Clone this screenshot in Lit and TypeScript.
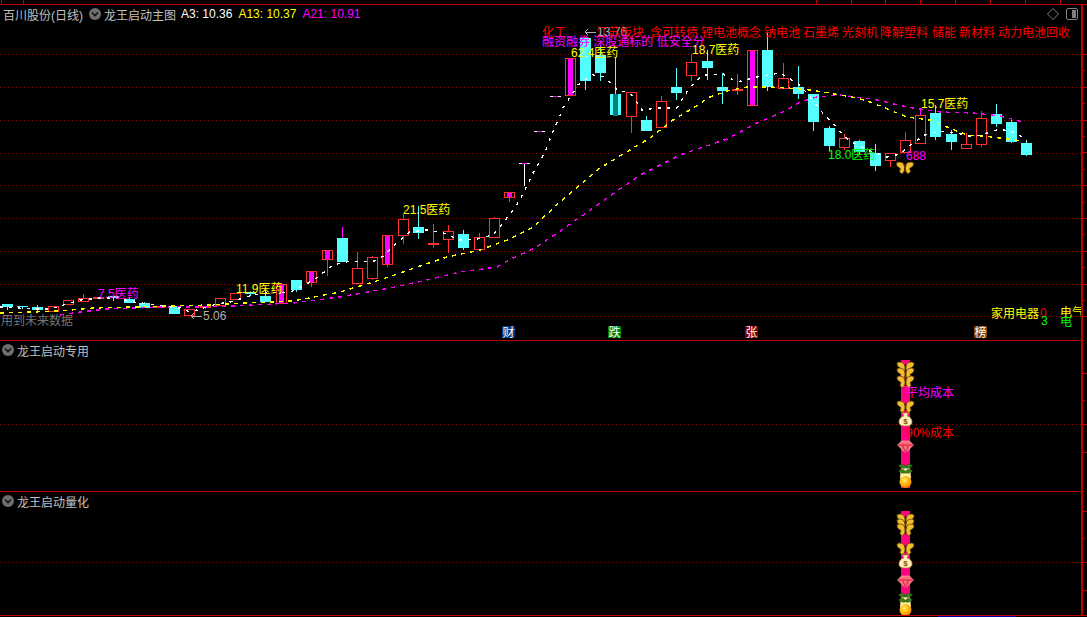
import { LitElement, html, css, svg } from "lit";
import { customElement } from "lit/decorators.js";

const W = 1081;

// [center x, kind, body top, body bottom, wick top, wick bottom, top wick colour]
// kinds: c cyan, t cyan with teal core, r hollow red, f flat red, m red with magenta core, w white T
type Candle = [number, string, number, number, number, number, string?];

const CANDLES: Candle[] = [
  [7, "c", 304, 307, 304, 310], [22, "c", 306, 307, 306, 309], [37, "c", 307, 310, 305, 312],
  [53, "r", 306, 311, 306, 311], [68, "r", 300, 304, 300, 304], [83, "r", 298, 301, 294, 301],
  [98, "f", 297, 299, 297, 299], [113, "c", 296, 298, 296, 301], [129, "c", 299, 303, 297, 303],
  [144, "c", 303, 308, 302, 308], [159, "f", 306, 308, 306, 308], [174, "c", 306, 314, 306, 314],
  [189, "r", 309, 315, 309, 315], [205, "f", 306, 308, 306, 309], [220, "r", 298, 305, 298, 305],
  [235, "r", 293, 299, 293, 299], [250, "c", 292, 294, 292, 296], [265, "c", 296, 302, 290, 302],
  [281, "m", 284, 303, 284, 303], [296, "c", 280, 290, 280, 292], [311, "m", 271, 282, 271, 287],
  [327, "m", 250, 259, 250, 276], [342, "c", 238, 262, 227, 262, "#ff00ff"], [357, "r", 268, 283, 252, 283],
  [372, "r", 257, 278, 256, 280], [387, "m", 235, 264, 235, 267], [403, "r", 219, 235, 214, 244],
  [418, "c", 227, 233, 206, 239], [433, "f", 243, 245, 224, 248], [448, "r", 231, 239, 225, 253],
  [463, "c", 234, 248, 230, 250], [479, "r", 237, 249, 233, 251], [494, "r", 218, 237, 217, 237],
  [509, "m", 192, 197, 192, 202], [524, "w", 163, 164, 163, 186], [539, "w", 131, 132, 131, 132],
  [555, "w", 96, 97, 96, 97], [570, "m", 58, 95, 58, 95], [585, "c", 38, 81, 37, 90],
  [600, "c", 55, 73, 45, 81], [615, "t", 94, 115, 58, 116], [631, "r", 92, 116, 92, 133],
  [646, "c", 120, 131, 116, 131], [661, "r", 101, 127, 96, 127, "#ff00ff"], [676, "c", 87, 93, 68, 100],
  [691, "r", 62, 75, 54, 81, "#ff00ff"], [707, "c", 61, 68, 50, 80], [722, "c", 87, 91, 73, 104],
  [737, "f", 89, 91, 74, 95], [752, "m", 50, 105, 50, 105], [767, "c", 50, 87, 33, 91],
  [783, "r", 78, 88, 63, 88], [798, "c", 87, 94, 66, 99], [813, "c", 94, 122, 94, 131],
  [829, "c", 128, 146, 126, 151], [844, "r", 138, 147, 134, 150], [859, "c", 141, 152, 140, 155],
  [875, "c", 153, 166, 144, 171], [890, "r", 153, 160, 153, 167], [905, "r", 140, 152, 132, 152],
  [920, "r", 115, 143, 108, 143, "#ff00ff"], [935, "c", 113, 137, 105, 140], [951, "c", 134, 142, 130, 150],
  [966, "r", 144, 148, 133, 148], [981, "r", 118, 144, 111, 147, "#ff00ff"], [996, "c", 114, 124, 104, 127],
  [1011, "c", 122, 142, 119, 143], [1026, "c", 143, 155, 140, 156],
];

const A3 = "0,307 33,309 50,309 60,306 80,300 100,298 117,298 133,302 150,304 163,306 180,308 190,312 207,307 217,304 230,302 253,295 267,293 290,292 305,285 318,277 333,265 350,261 372,262 382,257 397,243 410,232 427,230 443,233 460,240 477,239 493,235 507,218 520,200 533,173 545,152 550,139 563,108 578,85 593,75 605,77 617,90 630,93 642,110 657,108 677,108 690,87 703,75 723,74 737,82 757,77 780,73 797,83 807,93 822,112 837,128 848,140 867,150 887,157 900,154 913,143 925,135 940,131 957,133 973,137 987,133 1000,129 1017,133 1027,142";
const A13 = "0,313 33,312 60,311 93,308 133,307 167,306 210,305 247,303 293,301 340,292 383,279 417,267 447,257 480,250 510,239 533,227 559,203 600,168 650,138 673,120 693,108 710,97 727,91 747,87 770,87 803,89 823,92 840,95 857,98 873,103 890,110 907,117 930,120 947,127 967,135 983,136 1000,138 1023,141";
const A21 = "60,315 80,312 107,309 133,308 167,307 207,307 233,306 273,304 293,303 340,297 390,288 427,280 460,272 497,267 513,258 533,249 559,232 600,203 640,175 680,155 727,139 757,123 787,110 800,102 817,97 840,95 873,99 907,107 940,112 973,113 1000,116 1023,122";

const TAGS: [string, number][] = [
  ["化工", 542], ["江苏板块", 596], ["含可转债", 650], ["锂电池概念", 701], ["钠电池", 764],
  ["石墨烯", 803], ["光刻机", 842], ["降解塑料", 880], ["储能", 932], ["新材料", 959], ["动力电池回收", 998],
];

// [text, x, centre y, colour]
const LABELS: [string, number, number, string][] = [
  ["62.4医药", 571, 53, "#ffff00"], ["18.7医药", 692, 50, "#ffff00"], ["15.7医药", 921, 104, "#ffff00"],
  ["18.0医药", 828, 155, "#00ff00"], ["688", 906, 156, "#ff00ff"], ["21.5医药", 403, 210, "#ffff00"],
  ["7.5医药", 98, 294, "#ff00ff"], ["11.9医药", 236, 289, "#ffff00"],
];

const BADGES: [string, number, string][] = [
  ["财", 502, "#003c82"], ["跌", 608, "#008000"], ["张", 745, "#800000"], ["榜", 974, "#804000"],
];

const GRID = [54, 87, 120, 153, 185, 218, 251, 284, 316];
const TOP_TICKS = [1, 23, 816, 851, 885, 920, 955, 990, 1025, 1060];

const chevron = html`<svg class="chevron" viewBox="0 0 12 12">
  <circle cx="6" cy="6" r="6" fill="#6e6e6e"></circle>
  <path d="M3 4.5 6 7.5 9 4.5" fill="none" stroke="#111" stroke-width="1.6"></path>
</svg>`;

function candle([x, kind, top, bottom, wickTop, wickBottom, wickColor]: Candle) {
  const color = kind === "c" || kind === "t" ? "#55ffff" : kind === "w" ? "#ffffff" : "#ff3232";
  const left = x - 5;
  const wick = svg`
    <line x1=${x + 0.5} x2=${x + 0.5} y1=${wickTop} y2=${top} stroke=${wickColor ?? color}></line>
    <line x1=${x + 0.5} x2=${x + 0.5} y1=${bottom} y2=${wickBottom} stroke=${color}></line>`;
  if (kind === "c" || kind === "t") {
    return svg`${wick}<rect x=${left} y=${top} width="11" height=${bottom - top} fill=${color}></rect>
      ${kind === "t" ? svg`<rect x=${left + 3} y=${top} width="5" height=${bottom - top + 1} fill="#008080"></rect>` : ""}`;
  }
  if (kind === "f") {
    return svg`${wick}<rect x=${left} y=${top} width="11" height=${bottom - top} fill=${color}></rect>`;
  }
  if (kind === "w") {
    return svg`${wick}<rect x=${left} y=${top} width="11" height="1" fill="#ffffff"></rect>
      <rect x=${left + 3} y=${top} width="5" height="1" fill="#ff00ff"></rect>`;
  }
  return svg`${wick}
    <rect x=${left + 0.5} y=${top + 0.5} width="10" height=${bottom - top} fill="#000" stroke=${color}></rect>
    ${kind === "m" ? svg`<rect x=${left + 3} y=${top + 1} width="5" height=${bottom - top - 1} fill="#ff00ff"></rect>` : ""}`;
}

function butterfly(x: number, y: number) {
  const wing = "M0 0-2-5-6-6-8.5-5-8-2-4.5 .5-5.5 3.5-3 6-.8 3Z";
  return svg`<g transform="translate(${x} ${y})" shape-rendering="auto">
    <path d=${wing} fill="#f0c02c" stroke="#7a4a10" stroke-width=".8"></path>
    <path d=${wing} transform="scale(-1 1)" fill="#f0c02c" stroke="#7a4a10" stroke-width=".8"></path>
    <path d="M-.8-4H.8V4H-.8Z" fill="#4a2c08"></path>
  </g>`;
}

function moneyBag(x: number, y: number) {
  return svg`<g transform="translate(${x} ${y})" shape-rendering="auto">
    <path d="M-3-7H3L1.5-4C5.5-3 6.5 0 6.5 2 6.5 5 4 6 0 6-4 6-6.5 5-6.5 2-6.5 0-5.5-3-1.5-4Z" fill="#fff0b8" stroke="#b08a30" stroke-width=".7"></path>
    <text class="bag" x="0" y="4" text-anchor="middle">$</text>
  </g>`;
}

function ruby(x: number, y: number) {
  return svg`<g transform="translate(${x} ${y})" shape-rendering="auto">
    <path d="M-4-5H4L8-1 0 7-8-1Z" fill="#ff6a78" stroke="#ffb8b8" stroke-width=".6"></path>
    <path d="M-8-1H8M-3-1 0 7 3-1" fill="none" stroke="#c81e3c" stroke-width=".9"></path>
  </g>`;
}

function fruit(x: number, y: number) {
  return svg`<g transform="translate(${x} ${y})" shape-rendering="auto">
    <circle cx="0" cy="4" r="5.5" fill="#fff3a0"></circle>
    <path d="M-7-2C-4-5-1-4 0-1 1-4 4-5 7-2 4 1 1 0 0 0-1 0-4 1-7-2Z" fill="#3f7a1c" stroke="#1e4a0c" stroke-width=".5"></path>
  </g>`;
}

function orange(x: number, y: number) {
  return svg`<circle cx=${x} cy=${y} r="6" fill="url(#orange)" shape-rendering="auto"></circle>`;
}

function column(top: number, bottom: number, flies: number[], bag: number, gem: number, fruits: number[], ball: number) {
  return svg`
    <rect x="901" y=${top} width="9" height=${bottom - top} fill="#ff0080"></rect>
    ${flies.map((y) => butterfly(905.5, y))}
    ${moneyBag(905.5, bag)}
    ${ruby(905.5, gem)}
    ${fruits.map((y) => fruit(905.5, y))}
    ${orange(905.5, ball)}`;
}

function dotted(y: number) {
  return svg`<line class="grid" x1="0" x2=${W} y1=${y + 0.5} y2=${y + 0.5}></line>`;
}

function note(text: string, x: number, y: number, color: string) {
  return svg`<text class="note" x=${x} y=${y + 4} fill=${color}>${text}</text>`;
}

function arrow(x: number, y: number) {
  return svg`<path d="M${x + 12} ${y}H${x + 1}M${x + 4} ${y - 3}L${x + 1} ${y}L${x + 4} ${y + 3}" fill="none" stroke="#b0b0b0"></path>`;
}

const DEFS = svg`<defs>
  <radialGradient id="orange" cx=".4" cy=".35" r=".8">
    <stop offset="0" stop-color="#fff06a"></stop>
    <stop offset=".55" stop-color="#ffa800"></stop>
    <stop offset="1" stop-color="#d86a00"></stop>
  </radialGradient>
</defs>`;

@customElement("app-root")
export class AppRoot extends LitElement {
  static styles = css`
    :host {
      display: block;
      width: 1087px;
      height: 617px;
      background: #000;
      overflow: hidden;
      font: 12px "Liberation Sans", "Noto Sans CJK SC", sans-serif;
      color: #c0c0c0;
    }
    svg {
      display: block;
    }
    .top-ticks {
      height: 4px;
    }
    .body {
      display: flex;
      border-top: 1px solid #c00000;
      border-bottom: 1px solid #c00000;
    }
    .panes {
      width: 1081px;
      display: flex;
      flex-direction: column;
    }
    .pane {
      position: relative;
      border-bottom: 1px solid #c00000;
    }
    .pane:last-child {
      border-bottom: none;
    }
    .main {
      height: 335px;
    }
    .sub {
      height: 150px;
    }
    .last {
      height: 123px;
    }
    .plot {
      position: absolute;
      left: 0;
      top: 0;
      width: 1081px;
      height: 100%;
    }
    .legend {
      position: relative;
      z-index: 1;
      display: flex;
      align-items: center;
      height: 18px;
      padding-left: 3px;
      white-space: nowrap;
    }
    .sub .legend,
    .last .legend {
      padding-left: 2px;
    }
    .chevron {
      width: 12px;
      height: 12px;
      flex: none;
      margin: 0 3px 0 0;
    }
    .stock {
      width: 86px;
    }
    .name {
      width: 77px;
    }
    .value {
      margin-right: 6px;
    }
    .a3 {
      color: #ffffff;
    }
    .a13 {
      color: #ffff00;
    }
    .a21 {
      color: #ff00ff;
    }
    .tools {
      margin-left: auto;
      display: flex;
      align-items: center;
      gap: 6px;
      padding-right: 3px;
    }
    .axis {
      width: 4px;
      border-left: 2px solid #c00000;
    }
    .foot {
      height: 1px;
      width: 78px;
      margin-left: 938px;
      background: #0000a0;
    }
    .grid {
      stroke: #900000;
      stroke-dasharray: 1 3;
    }
    .ma {
      fill: none;
      stroke-width: 1.4;
    }
    .note {
      font: 12px "Liberation Sans", "Noto Sans CJK SC", sans-serif;
    }
    .badge {
      font: 12px "Noto Sans CJK SC", sans-serif;
      fill: #fff;
      text-anchor: middle;
    }
    .bag {
      font: bold 8px "Liberation Sans", sans-serif;
      fill: #8a4a10;
    }
  `;

  private mainPlot() {
    return html`<svg class="plot" viewBox="0 5 ${W} 335" shape-rendering="crispEdges">
      ${DEFS}
      ${GRID.map(dotted)}
      ${CANDLES.map(candle)}
      <polyline class="ma" points=${A21} stroke="#ff00ff" stroke-dasharray="4 5"></polyline>
      <polyline class="ma" points=${A13} stroke="#ffff00" stroke-dasharray="4 5"></polyline>
      <polyline class="ma" points=${A3} stroke="#ffffff" stroke-dasharray="3 6"></polyline>
      ${arrow(584, 32)}
      ${note("13.76", 597, 32, "#b0b0b0")}
      ${TAGS.map(([t, x]) => note(t, x, 33, "#ff0000"))}
      ${note("融资融券 深股通标的 低安全分", 542, 42, "#ff00ff")}
      ${LABELS.map(([t, x, y, c]) => note(t, x, y, c))}
      ${butterfly(905, 168)}
      ${arrow(190, 316)}
      ${note("5.06", 203, 316, "#b0b0b0")}
      ${note("用到未来数据", 1, 321, "#767676")}
      ${BADGES.map(([t, x, bg]) => svg`
        <rect x=${x} y="326" width="13" height="12" fill=${bg}></rect>
        <text class="badge" x=${x + 6.5} y="336.5">${t}</text>`)}
      ${note("家用电器", 991, 314, "#ffff00")}
      ${note("0", 1040, 313, "#ff0000")}
      ${note("3", 1041, 321, "#00ff00")}
      ${note("电气", 1060, 313, "#ffff00")}
      ${note("电", 1060, 322, "#00ff00")}
    </svg>`;
  }

  private subPlot(top: number, height: number, body: unknown) {
    return html`<svg class="plot" viewBox="0 ${top} ${W} ${height}" shape-rendering="crispEdges">
      ${DEFS}
      ${body}
    </svg>`;
  }

  private axisTicks() {
    const ticks: [number, number][] = [];
    for (let k = 0; k <= 16; k++) ticks.push([Math.round(54 + k * 16.4), k % 2 ? 2 : 4]);
    [373, 424, 452, 511, 562, 590].forEach((y) => ticks.push([y, 4]));
    [400, 538].forEach((y) => ticks.push([y, 2]));
    return html`<svg width="4" height="610" viewBox="0 5 4 610" shape-rendering="crispEdges">
      ${ticks.map(([y, w]) => svg`<rect x="0" y=${y} width=${w} height="1" fill="#c00000"></rect>`)}
    </svg>`;
  }

  render() {
    return html`
      <svg class="top-ticks" width="1087" height="4" shape-rendering="crispEdges">
        ${TOP_TICKS.map((x) => svg`<rect x=${x} y="0" width="1" height="4" fill="#c00000"></rect>`)}
      </svg>
      <div class="body">
        <div class="panes">
          <div class="pane main">
            ${this.mainPlot()}
            <div class="legend">
              <span class="stock">百川股份(日线)</span>
              ${chevron}
              <span class="name">龙王启动主图</span>
              <span class="value a3">A3: 10.36</span>
              <span class="value a13">A13: 10.37</span>
              <span class="value a21">A21: 10.91</span>
              <span class="tools">
                <svg width="14" height="14" viewBox="0 0 14 14">
                  <path d="M7 1.5 12.5 7 7 12.5 1.5 7Z" fill="none" stroke="#808080"></path>
                </svg>
                <svg width="12" height="12" viewBox="0 0 12 12">
                  <rect x=".5" y=".5" width="11" height="11" rx="1.5" fill="none" stroke="#808080"></rect>
                  <rect x="6" y="2" width="4" height="8" fill="#808080"></rect>
                </svg>
              </span>
            </div>
          </div>
          <div class="pane sub">
            ${this.subPlot(341, 150, svg`
              ${dotted(424)}
              ${column(360, 488, [368, 374, 382, 407], 420, 446, [468, 473], 482)}
              ${note("平均成本", 906, 393, "#ff00ff")}
              ${note("90%成本", 906, 433, "#ff0000")}
            `)}
            <div class="legend">${chevron}<span>龙王启动专用</span></div>
          </div>
          <div class="pane last">
            ${this.subPlot(492, 123, svg`
              ${dotted(562)}
              ${column(511, 600, [520, 525, 530, 549], 562, 581, [597, 602], 610)}
            `)}
            <div class="legend">${chevron}<span>龙王启动量化</span></div>
          </div>
        </div>
        <div class="axis">${this.axisTicks()}</div>
      </div>
      <div class="foot"></div>
    `;
  }
}
